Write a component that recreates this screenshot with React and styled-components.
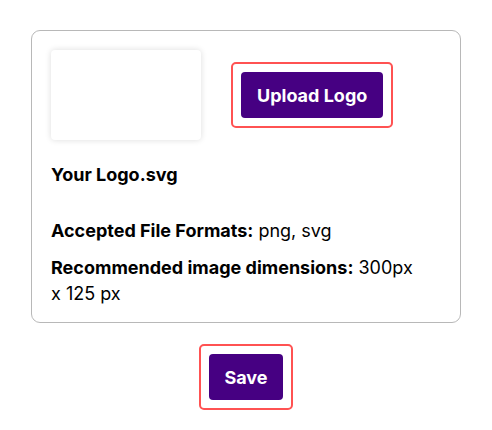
import React from 'react';
import styled, { createGlobalStyle } from 'styled-components';

const GlobalStyle = createGlobalStyle`
  body {
    margin: 0;
    background: #fff;
    font-family: Inter, "Liberation Sans", sans-serif;
    color: #000;
  }
`;

const Page = styled.div`
  display: flex;
  flex-direction: column;
  align-items: center;
  padding-top: 30px;
`;

const Card = styled.div`
  width: 430px;
  box-sizing: border-box;
  border: 1px solid #b8b8b8;
  border-radius: 9px;
  padding: 19px 19px 15px;
`;

const Row = styled.div`
  display: flex;
  align-items: center;
  gap: 30px;
`;

const Thumb = styled.div`
  width: 150px;
  height: 90px;
  border-radius: 4px;
  background: #fff;
  box-shadow: 0 0 6px rgba(0, 0, 0, 0.14);
`;

const Focus = styled.div`
  padding: 8px;
  border: 2px solid #ff5252;
  border-radius: 5px;
  display: inline-flex;
`;

const Button = styled.button`
  height: 46px;
  padding: 0 ${p => p.$px}px;
  background: #460082;
  color: #fff;
  border: none;
  border-radius: 4px;
  font-family: inherit;
  font-size: 18px;
  font-weight: 700;
  cursor: pointer;
`;

const FileName = styled.div`
  margin-top: 22px;
  font-size: 18px;
  line-height: 26px;
  font-weight: 700;
`;

const Info = styled.p`
  margin: ${p => p.$mt}px 0 0;
  max-width: 362px;
  font-size: 18px;
  line-height: 26px;

  b {
    font-weight: 700;
  }
`;

const Footer = styled.div`
  margin-top: 21px;
`;

const App = () => (
  <>
    <GlobalStyle />
    <Page>
      <Card>
        <Row>
          <Thumb />
          <Focus>
            <Button $px={16}>Upload Logo</Button>
          </Focus>
        </Row>
        <FileName>Your Logo.svg</FileName>
        <Info $mt={30}><b>Accepted File Formats:</b> png, svg</Info>
        <Info $mt={11}><b>Recommended image dimensions:</b> 300px x 125 px</Info>
      </Card>
      <Footer>
        <Focus>
          <Button $px={15}>Save</Button>
        </Focus>
      </Footer>
    </Page>
  </>
);

export default App;
